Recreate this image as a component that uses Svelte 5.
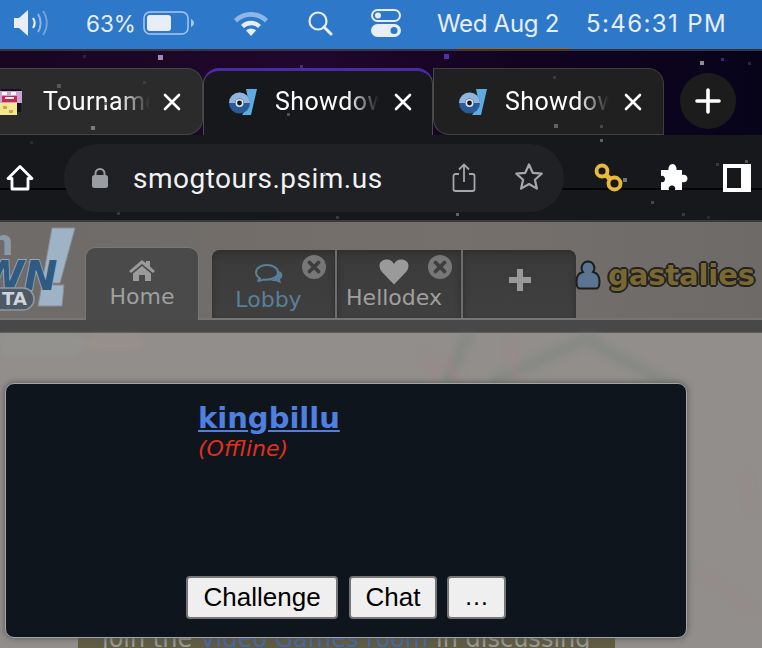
<script>
  const stars = [
    [158,55,5,'#c9b4f0'],[83,55,3,'#3a2a5a'],[300,65,3,'#5a3a7a'],[444,54,5,'#6a3fd0'],[700,61,4,'#bbb'],[721,58,3,'#4a2fa0'],[748,62,3,'#333'],
    [57,84,4,'#666'],[91,126,4,'#999'],[143,81,3,'#444'],[104,102,3,'#444'],[287,113,3,'#665'],[554,124,4,'#777'],[553,76,3,'#444'],[600,125,3,'#555'],
    [323,172,3,'#555'],[117,212,3,'#444'],[600,139,3,'#777'],[623,178,4,'#8a8fa0'],[651,201,3,'#555'],[716,163,3,'#444'],[745,160,3,'#666'],[456,213,3,'#778'],[30,141,3,'#333'],[682,213,3,'#444'],[707,216,3,'#333'],[336,216,3,'#444']
  ];
  const tabs = [
    { cls: 'first', icon: 'sprite', label: 'Tourname' },
    { cls: 'active', icon: 'ps', label: 'Showdow' },
    { cls: 'third', icon: 'ps', label: 'Showdow' }
  ];
</script>

<div class="screen">
  <header class="menubar">
    <svg viewBox="0 0 40 28" width="40" height="28"><path d="M1 9h5l9-8v26l-9-8H1z" fill="#e8eef8"/><path d="M20 9c2 3 2 7 0 10" fill="none" stroke="#e8eef8" stroke-width="2.2"/><path d="M25 5c3.500 5 3.500 13 0 18" fill="none" stroke="#8db7e6" stroke-width="2"/><path d="M30 2c5 7 5 17 0 24" fill="none" stroke="#6fa2dc" stroke-width="2"/></svg>
    <span class="pct">63%</span>
    <svg class="batt" viewBox="0 0 52 24" width="52" height="24"><rect x="1" y="1" width="44" height="22" rx="6" fill="none" stroke="#a9c8ee" stroke-width="1.500"/><rect x="4" y="4" width="24" height="16" rx="3" fill="#e8eef8"/><path d="M48 8c2 1 3 2.500 3 4s-1 3-3 4z" fill="#a9c8ee"/></svg>
    <svg class="wifi" viewBox="0 0 36 26" width="36" height="26"><path d="M1 9a24 24 0 0 1 34 0l-3 3.500a20 20 0 0 0-28 0z" fill="#8db7e6"/><path d="M8 15a14 14 0 0 1 20 0l-3 3a10 10 0 0 0-14 0z" fill="#e8eef8"/><path d="M13 20.500a7 7 0 0 1 10 0L18 26z" fill="#e8eef8"/></svg>
    <svg class="search" viewBox="0 0 26 26" width="26" height="26"><circle cx="11" cy="11" r="8.500" fill="none" stroke="#e8eef8" stroke-width="2.200"/><path d="M17 17l7 7" stroke="#e8eef8" stroke-width="3" stroke-linecap="round"/></svg>
    <svg class="ctrl" viewBox="0 0 30 28" width="30" height="28"><rect x="1" y="1" width="28" height="11" rx="5.500" fill="none" stroke="#e8eef8" stroke-width="2"/><circle cx="7" cy="6.500" r="3" fill="#e8eef8"/><rect x="0" y="15" width="30" height="13" rx="6.500" fill="#e8eef8"/><circle cx="23" cy="21.500" r="3.500" fill="#2e78c9"/></svg>
    <span class="date">Wed Aug 2</span>
    <span class="time">5:46:31 PM</span>
    <i class="notch"></i>
  </header>

  <section class="chrome">
    {#each stars as s}
      <i class="star" style="left:{s[0]}px;top:{s[1]-49}px;width:{s[2]}px;height:{s[2]}px;background:{s[3]}"></i>
    {/each}
    <div class="tabstrip">
      {#each tabs as t}
        <div class="tab {t.cls}">
          {#if t.icon === 'sprite'}
            <svg class="sprite" viewBox="0 0 24 28" width="24" height="28" shape-rendering="crispEdges"><rect x="2" y="1" width="20" height="15" fill="#171018"/><rect x="0" y="3" width="23" height="12" fill="#c8a4d8"/><rect x="3" y="8" width="15" height="6" fill="#c9274e"/><rect x="3" y="4" width="5" height="3" fill="#fff"/><rect x="12" y="4" width="5" height="3" fill="#fff"/><rect x="6" y="9" width="9" height="2" fill="#fff"/><rect x="0" y="15" width="18" height="12" fill="#f3e88f"/><rect x="4" y="18" width="4" height="3" fill="#c9a850"/><rect x="10" y="22" width="4" height="3" fill="#c9a850"/><rect x="18" y="15" width="4" height="9" fill="#171018"/></svg>
          {:else}
            <svg class="ps" viewBox="0 0 28 28" width="28" height="28"><path d="M17 1h11l-6 26H13l5-7c2-3 1-10-1-19z" fill="#5cace0"/><circle cx="10.500" cy="15" r="10.500" fill="#2a5a98"/><path d="M0 15a10.500 10.500 0 0 1 21 0h-6a4.500 4.500 0 0 0-9 0z" fill="#90b4da"/><circle cx="10.500" cy="15" r="4" fill="#dfe6ee"/><circle cx="10.500" cy="15" r="2.400" fill="#14181f"/></svg>
          {/if}
          <span class="label">{t.label}</span>
          <svg class="x" viewBox="0 0 18 18" width="18" height="18"><path d="M2 2l14 14M16 2 2 16" stroke="#fff" stroke-width="2.600" stroke-linecap="round"/></svg>
        </div>
      {/each}
      <div class="newtab"><svg viewBox="0 0 26 26" width="26" height="26"><path d="M13 2v22M2 13h22" stroke="#fff" stroke-width="3.600" stroke-linecap="round"/></svg></div>
    </div>
    <div class="toolbar">
      <svg class="home" viewBox="0 0 28 28" width="28" height="28"><path d="M14 2.500 2 14.500h4v10.500h16V14.500h4z" fill="none" stroke="#fff" stroke-width="2.800" stroke-linejoin="round"/></svg>
      <div class="omni">
        <svg viewBox="0 0 18 22" width="18" height="22"><path d="M4.500 9V6.500a4.500 4.500 0 0 1 9 0V9" fill="none" stroke="#9a9da1" stroke-width="2"/><rect x="1" y="8" width="16" height="13" rx="2.500" fill="#9a9da1"/></svg>
        <span class="url">smogtours.psim.us</span>
        <svg viewBox="0 0 24 30" width="24" height="30"><path d="M7 11H3.500a2 2 0 0 0-2 2v13a2 2 0 0 0 2 2h17a2 2 0 0 0 2-2V13a2 2 0 0 0-2-2H17" fill="none" stroke="#a4a7ab" stroke-width="1.800"/><path d="M12 19V2M7 6.500 12 1.500l5 5" fill="none" stroke="#a4a7ab" stroke-width="1.800"/></svg>
        <svg class="starbtn" viewBox="0 0 30 29" width="30" height="29"><path d="M15 2.500l3.700 8.300 9 .9-6.800 6 2 8.900L15 22l-7.900 4.600 2-8.900-6.800-6 9-.9z" fill="none" stroke="#a4a7ab" stroke-width="2.200" stroke-linejoin="round"/></svg>
      </div>
      <svg class="link" viewBox="0 0 30 30" width="30" height="30"><circle cx="8" cy="8" r="5.500" fill="none" stroke="#e8b93c" stroke-width="3.800"/><circle cx="20.500" cy="20.500" r="6" fill="none" stroke="#e8b93c" stroke-width="3.800"/><path d="M11 11l6 6" stroke="#e8b93c" stroke-width="5"/></svg>
      <svg class="puzzle" viewBox="0 0 30 29" width="30" height="29"><path d="M3 7h7.500c-.5-3 1.500-6 4-6s4.500 3 4 6H24v5c3-1 5.500 1 5.500 3.500S27 20 24 19v8h-7c1-3-1-4.500-3-4.500s-4 1.500-3 4.500H3v-8c2 1 4-.5 4-3s-2-4-4-3z" fill="#fff"/></svg>
      <div class="sidepanel"><span></span></div>
    </div>
  </section>

  <main class="page">
    <svg class="blotches" viewBox="0 0 762 316" width="762" height="316">
      <g fill="none" stroke-linecap="round">
        <path d="M468 0 L448 46 M594 1 L497 46 M594 10 L680 56" stroke="#76837a" stroke-width="11" opacity=".4"/>
        <path d="M445 25 L460 48 M510 10 L518 46 M425 20 L440 48" stroke="#b87f88" stroke-width="5" opacity=".35"/>
        <path d="M697 236 L754 276 M747 141 L750 176" stroke="#b87f88" stroke-width="5" opacity=".2"/>
        <path d="M0 8 H70" stroke="#a0ada2" stroke-width="30" opacity=".15"/>
        <path d="M95 8 H135" stroke="#b89a84" stroke-width="18" opacity=".18"/>
      </g>
    </svg>

    <header class="head">
      <svg class="logo" viewBox="0 0 80 98" width="80" height="98">
        <text x="-12" y="35" class="logo-n">n</text>
        <path d="M52 8h23L60 63H42z" fill="#9fb3c6" stroke="#8a8d92" stroke-width="1"/>
        <path d="M42 65h22l-2 21H38z" fill="#9fb3c6" stroke="#8a8d92" stroke-width="1"/>
        <text x="-20" y="70" class="logo-wn">WN</text>
        <rect x="-30" y="68" width="64" height="22" rx="11" fill="#4e5966" stroke="#8d9aa6" stroke-width="1.500"/>
        <text x="2" y="85" class="logo-ta">TA</text>
      </svg>
      <nav class="navtabs">
        <a class="nt homet">
          <svg viewBox="0 0 26 22" width="26" height="22"><path d="M13 1 0 12l2 2 11-9 11 9 2-2-5-4.500V2h-4v2z" fill="#9a9a9a"/><path d="M4 14.500 13 7l9 7.500V22h-6v-6h-6v6H4z" fill="#9a9a9a"/></svg>
          <span>Home</span>
        </a>
        <div class="group">
          <a class="nt lobby">
            <svg viewBox="0 0 30 24" width="30" height="24"><path d="M13 2c-6 0-11 3-11 7.500 0 2.500 1.500 4.500 4 6-.5 1-1.500 2-2.500 2.500 2.500 0 4.500-.5 6-1.500 5 .6 14.500-1 14.500-7C24 5 19 2 13 2z" fill="none" stroke="#5a7f9b" stroke-width="2"/><path d="M25 8c3 1 4 3.500 3 6-.5 1-1 1.500-2 2.500l1 4-5-2.500c-2 .4-4 0-6-1 4 0 8-3 9-9z" fill="#5a7f9b"/></svg>
            <span>Lobby</span>
            <b class="close"><svg viewBox="0 0 24 24" width="24" height="24"><circle cx="12" cy="12" r="12" fill="#777"/><path d="M7.500 7.500l9 9M16.500 7.500l-9 9" stroke="#3e3e3e" stroke-width="3.800" stroke-linecap="round"/></svg></b>
          </a>
          <a class="nt hello">
            <svg viewBox="0 0 30 26" width="30" height="26"><path d="M15 25.500 3 13C-1 8-.5 1.500 7 .5c4-.3 6.500 1.500 8 4.500 1.500-3 4-4.800 8-4.500 7.500 1 8 7.500 4 12.500z" fill="#9a9a9a"/></svg>
            <span>Hellodex</span>
            <b class="close"><svg viewBox="0 0 24 24" width="24" height="24"><circle cx="12" cy="12" r="12" fill="#777"/><path d="M7.500 7.500l9 9M16.500 7.500l-9 9" stroke="#3e3e3e" stroke-width="3.800" stroke-linecap="round"/></svg></b>
          </a>
          <a class="nt plus"><svg viewBox="0 0 22 22" width="22" height="22"><path d="M11 1v20M1 11h20" stroke="#999" stroke-width="6" stroke-linecap="round"/></svg></a>
        </div>
      </nav>
      <div class="user">
        <svg viewBox="0 0 26 30" width="26" height="30"><path d="M13 1.500a6.500 6.500 0 0 1 5 10.500c4 1 6.500 3.500 6.500 9 0 4-1 7.500-3 7.500H4.500c-2 0-3-3.500-3-7.500 0-5.500 2.500-8 6.500-9a6.500 6.500 0 0 1 5-10.500z" fill="#5a7491" stroke="#1d1d1d" stroke-width="2"/></svg>
        <span>gastalies</span>
      </div>
    </header>
    <div class="bar"></div>

    <div class="behind"><span>join the <em>Video Games room</em> in discussing</span></div>

    <article class="popup">
      <div class="info">
        <a class="name">kingbillu</a>
        <em class="status">(Offline)</em>
      </div>
      <div class="buttons">
        <button>Challenge</button>
        <button class="chat">Chat</button>
        <button class="more">…</button>
      </div>
    </article>
  </main>
</div>

<style>
  :global(body) { margin: 0; background: #000; }
  .screen { width: 762px; height: 648px; overflow: hidden; display: flex; flex-direction: column; position: relative; }

  .menubar {
    height: 49px; flex: none; box-sizing: border-box; background: #2e78c9; color: #e8eef8; position: relative;
    display: flex; align-items: center; padding: 0 0 3px 13px;
    font-family: Inter, "Liberation Sans", sans-serif; font-size: 24px;
  }
  .pct { margin-left: 33px; font-size: 22.500px; }
  .batt { margin-left: 7px; }
  .wifi { margin-left: 38px; }
  .search { margin-left: 38px; }
  .ctrl { margin-left: 38px; }
  .date { margin-left: 36px; letter-spacing: -.3px; white-space: nowrap; }
  .time { margin-left: 27px; letter-spacing: 1.400px; white-space: nowrap; }
  .notch { position: absolute; left: 457px; bottom: 0; width: 113px; height: 1px; background: #8a6a30; }

  .chrome {
    height: 173px; flex: none; position: relative; box-sizing: border-box;
    background: #17181b; border-bottom: 2px solid #3a3a3a;
  }
  .star { position: absolute; z-index: 3; opacity: .75; }

  .tabstrip {
    height: 86px; box-sizing: border-box; padding-top: 17px; display: flex; align-items: stretch;
    background: linear-gradient(90deg, #170720, #1f082c 40%, #110420 70%, #07041a);
    border-top: 2px solid #3a3340;
  }
  .tab {
    width: 230px; height: 67px; box-sizing: border-box; display: flex; align-items: center; flex: none;
    color: #fff; font-family: Roboto, "Liberation Sans", sans-serif; font-size: 25px; position: relative; z-index: 1;
  }
  .first { width: 203px; background: #2b2b2b; border-radius: 0 16px 16px 0; border: 1px solid #454545; border-left: 0; }
  .active { background: #17181b; border: 1px solid #4a4a4c; border-bottom: 0; border-top: 3px solid #4b2aa8; border-radius: 16px 16px 0 0; padding: 0 0 3px 25px; z-index: 2; }
  .third { width: 231px; background: #202020; border: 1px solid #3f3f3f; border-left-color: #4a4a4c; border-radius: 0 16px 0 16px; padding-left: 25px; }
  .sprite { margin-right: 20px; margin-left: -1px; flex: none; }
  .ps { margin-right: 18px; flex: none; }
  .label {
    width: 104px; overflow: hidden; white-space: nowrap; flex: none; letter-spacing: .4px;
    -webkit-mask-image: linear-gradient(90deg, #000 70%, transparent 100%);
    mask-image: linear-gradient(90deg, #000 70%, transparent 100%);
  }
  .first .label { width: 107px; }
  .x { margin-left: 15px; flex: none; }
  .first .x { margin-left: 13px; }
  .newtab {
    width: 56px; height: 56px; border-radius: 50%; background: #1c1c1c; margin: 5px 0 0 16px;
    display: flex; align-items: center; justify-content: center; flex: none;
  }

  .toolbar { height: 85px; display: flex; align-items: center; padding: 0 0 0 6px; box-sizing: border-box; position: relative; z-index: 1; }
  .toolbar::before { content: ""; position: absolute; left: 0; right: 0; top: 53px; height: 2px; background: #050505; }
  .toolbar > * { position: relative; }
  .home { flex: none; }
  .omni {
    margin-left: 30px; width: 500px; height: 68px; flex: none; border-radius: 34px; background: #202124;
    display: flex; align-items: center; padding-left: 27px; box-sizing: border-box;
  }
  .url { margin: 2px 0 0 24px; width: 319px; color: #f2f2f2; font-family: Roboto, "Liberation Sans", sans-serif; font-size: 28px; letter-spacing: .5px; flex: none; }
  .starbtn { margin-left: 38px; margin-top: -2px; }
  .link { margin-left: 30px; flex: none; }
  .puzzle { margin-left: 34px; flex: none; }
  .sidepanel { margin-left: 35px; width: 28px; height: 28px; background: #fff; flex: none; display: flex; box-sizing: border-box; padding: 4px 10px 4px 4px; }
  .sidepanel span { flex: 1; background: #17181b; }

  .page {
    flex: 1; position: relative; display: flex; flex-direction: column;
    background: #918e8c; font-family: "DejaVu Sans", sans-serif;
  }
  .blotches { position: absolute; left: 0; top: 112px; filter: blur(3.500px); }
  .head {
    height: 98px; display: flex; flex: none; position: relative; box-sizing: border-box;
    background: linear-gradient(90deg, #6f6b68 0 10%, #75706c 60%, #6d6a68);
    border-bottom: 2px solid #767676;
  }
  .logo { position: absolute; left: 0; top: -2px; overflow: visible; }
  .logo-n { font: bold 36px "DejaVu Sans", sans-serif; fill: #8b9aa8; }
  .logo-wn { font: italic bold 40px "DejaVu Sans", sans-serif; fill: #2f5a82; stroke: #9fb3c6; stroke-width: 1.500; paint-order: stroke; }
  .logo-ta { font: bold 18px "DejaVu Sans", sans-serif; fill: #cfd5da; }

  .navtabs { margin-left: 85px; display: flex; align-items: flex-end; position: relative; height: 96px; }
  .nt {
    box-sizing: border-box; color: #a0a0a0; font-size: 22px; text-align: center;
    display: flex; flex-direction: column; align-items: center; position: relative;
  }
  .nt svg { display: block; }
  .homet {
    width: 114px; height: 73px; margin-bottom: -2px; background: #4a4a4a; border: 1px solid #777; border-bottom: 0;
    border-radius: 10px 10px 0 0; padding-top: 11px; z-index: 1; gap: 3px;
  }
  .group { margin-left: 13px; display: flex; height: 68px; }
  .group .nt { background: linear-gradient(#3a3a3a, #404040); height: 68px; box-shadow: inset 0 3px 6px #2e2e2e; }
  .lobby { width: 125px; border-radius: 8px 0 0 0; padding: 13px 10px 0 0; color: #5a7f9b; border-right: 2px solid #6c6c6c; }
  .hello { width: 126px; padding: 9px 10px 0 0; border-right: 2px solid #6c6c6c; }
  .plus { width: 113px; border-radius: 0 8px 0 0; justify-content: center; padding-bottom: 8px; }
  .close { position: absolute; right: 9px; top: 5px; }
  .close svg { display: block; }
  .user { position: absolute; left: 575px; top: 36px; display: flex; align-items: center; gap: 7px; }
  .user span {
    font-weight: bold; font-size: 29px; color: #7a6833; letter-spacing: -.1px;
    text-shadow: -2px 0 #222, 2px 0 #222, 0 -2px #222, 0 2px #222, -1px -1px #222, 1px 1px #222, 1px -1px #222, -1px 1px #222;
  }
  .bar { height: 12px; flex: none; background: #484848; border-bottom: 1px solid #5e5c5b; }

  .behind {
    position: absolute; left: 78px; width: 537px; bottom: 0; height: 20px; background: #5f5c42; color: #9a9a9a;
    font-size: 24px; overflow: hidden; line-height: 20px; white-space: nowrap;
  }
  .behind span { position: absolute; top: 1px; left: 24px; }
  .behind em { font-style: normal; color: #4568ac; }

  .popup {
    position: absolute; left: 5px; top: 161px; width: 682px; height: 255px; box-sizing: border-box;
    background: #0e151d; border: 1px solid #a5a5a5; border-radius: 9px; box-shadow: 0 0 6px #555;
    display: flex; flex-direction: column; z-index: 2;
  }
  .info { margin: 19px 0 0 192px; display: flex; flex-direction: column; align-items: flex-start; }
  .name { color: #4f7fe0; font-weight: bold; font-size: 29px; text-decoration: underline; line-height: 31px; }
  .status { color: #e0301e; font-size: 22px; line-height: 26px; margin-top: 2px; }
  .buttons { margin: auto 0 18px 180px; display: flex; gap: 11px; }
  button {
    font-family: "Liberation Sans", sans-serif; font-size: 26px; color: #000; background: #efefef;
    border: 2px solid #767676; border-radius: 4px; height: 43px; padding: 0 15.500px 2px; line-height: 1;
  }
  .chat { padding: 0 14.500px 2px; }
  .more { margin-left: -1px; padding: 0 15px 2px; font-size: 25px; }
</style>
